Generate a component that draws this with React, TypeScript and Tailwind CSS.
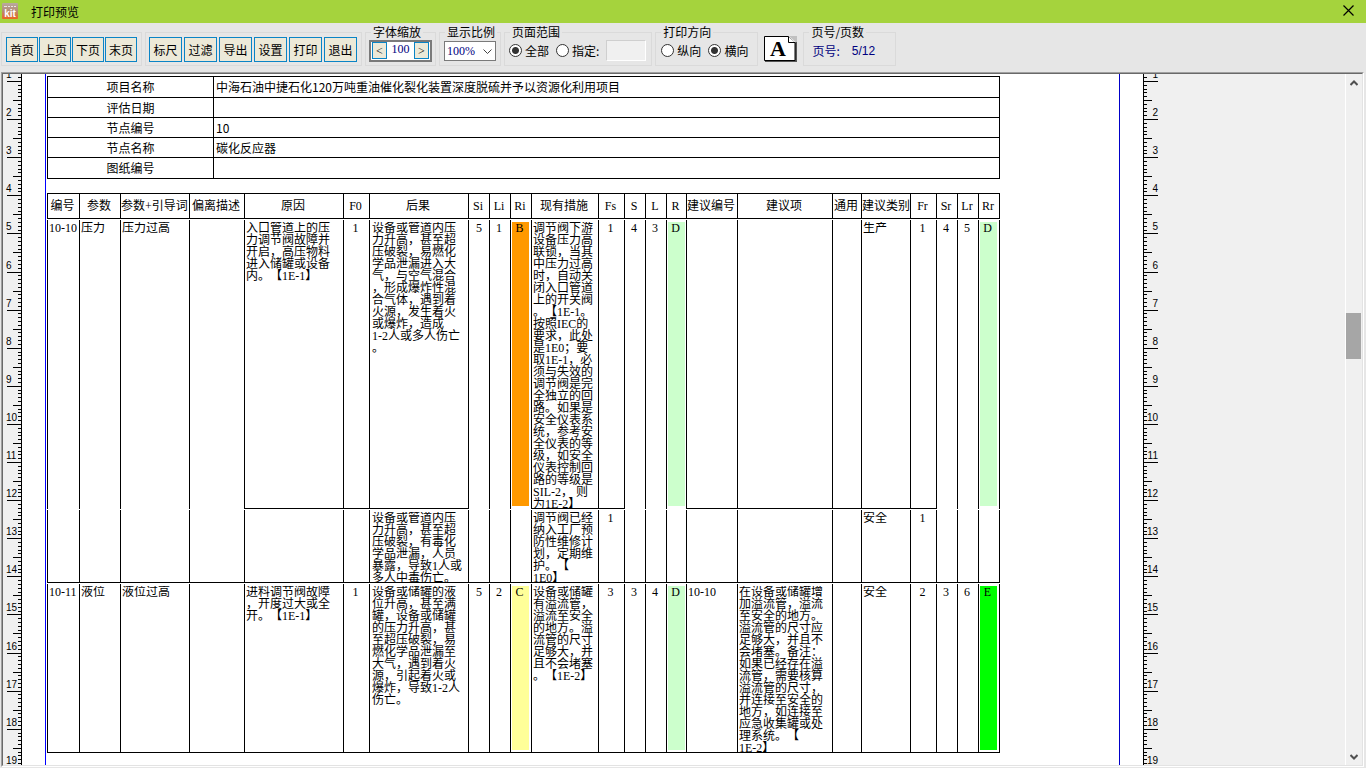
import { useState } from 'react';
import type { ReactNode } from 'react';

type Cell = {
  text?: string;
  fill?: string;
  open?: boolean; // no bottom rule, the cell runs on into the next row
};

type Row = {
  id: string;
  textHeight: string;
  fillHeight: string;
  cells: Cell[];
};

const columns = [
  { title: '编号', width: 'w-[33px]', body: 'pl-px' },
  { title: '参数', width: 'w-[41px]', body: 'pl-px' },
  { title: '参数+引导词', width: 'w-[69px]', body: 'pl-px' },
  { title: '偏离描述', width: 'w-[55px]', body: 'pl-px' },
  { title: '原因', width: 'w-[99px]', body: 'pl-px' },
  { title: 'F0', width: 'w-[26px]', body: 'pr-0.5 text-center' },
  { title: '后果', width: 'w-[99px]', body: 'pl-0.5' },
  { title: 'Si', width: 'w-[21px]', body: 'text-center' },
  { title: 'Li', width: 'w-[21px]', body: 'pr-0.5 text-center' },
  { title: 'Ri', width: 'w-[21px]', body: 'text-center' },
  { title: '现有措施', width: 'w-[67px]', body: 'pl-px' },
  { title: 'Fs', width: 'w-[26px]', body: 'pr-0.5 text-center' },
  { title: 'S', width: 'w-[21px]', body: 'pr-0.5 text-center' },
  { title: 'L', width: 'w-[21px]', body: 'pr-0.5 text-center' },
  { title: 'R', width: 'w-[20px]', body: 'text-center' },
  { title: '建议编号', width: 'w-[51px]', body: 'pl-px' },
  { title: '建议项', width: 'w-[95px]', body: 'pl-px' },
  { title: '通用', width: 'w-[29px]', body: 'pl-px' },
  { title: '建议类别', width: 'w-[49px]', body: 'pl-px' },
  { title: 'Fr', width: 'w-[26px]', body: 'pr-0.5 text-center' },
  { title: 'Sr', width: 'w-[21px]', body: 'pr-0.5 text-center' },
  { title: 'Lr', width: 'w-[21px]', body: 'pr-0.5 text-center' },
  { title: 'Rr', width: 'w-[21px]', body: 'text-center' },
];

const rows: Row[] = [
  {
    id: '10-10',
    textHeight: 'h-[286px]',
    fillHeight: 'h-[284px]',
    cells: [
      { text: '10-10', open: true },
      { text: '压力', open: true },
      { text: '压力过高', open: true },
      { open: true },
      { text: '入口管道上的压\n力调节阀故障并\n开启，高压物料\n进入储罐或设备\n内。【1E-1】' },
      { text: '1' },
      {
        text: '设备或管道内压\n力升高，甚至超\n压破裂，易燃化\n学品泄漏进入大\n气，与空气混合\n，形成爆炸性混\n合气体，遇到着\n火源，发生着火\n或爆炸，造成\n1-2人或多人伤亡\n。',
      },
      { text: '5', open: true },
      { text: '1', open: true },
      { text: 'B', fill: 'bg-[#ff9900]', open: true },
      {
        text: '调节阀下游\n设备压力高\n联锁，当其\n中压力过高\n时，自动关\n闭入口管道\n上的开关阀\n。【1E-1。\n按照IEC的\n要求，此处\n是1E0；要\n取1E-1，必\n须与失效的\n调节阀是完\n全独立的回\n路。如果是\n安全仪表系\n统，参考安\n全仪表的等\n级，如安全\n仪表控制回\n路的等级是\nSIL-2， 则\n为1E-2】',
      },
      { text: '1' },
      { text: '4', open: true },
      { text: '3', open: true },
      { text: 'D', fill: 'bg-[#ccffcc]', open: true },
      {},
      {},
      {},
      { text: '生产' },
      { text: '1' },
      { text: '4', open: true },
      { text: '5', open: true },
      { text: 'D', fill: 'bg-[#ccffcc]', open: true },
    ],
  },
  {
    id: '10-10-2',
    textHeight: 'h-[70px]',
    fillHeight: 'h-[68px]',
    cells: [
      {},
      {},
      {},
      {},
      {},
      {},
      { text: '设备或管道内压\n力升高，甚至超\n压破裂，有毒化\n学品泄漏，人员\n暴露，导致1人或\n多人中毒伤亡。' },
      {},
      {},
      {},
      { text: '调节阀已经\n纳入工厂预\n防性维修计\n划，定期维\n护。【\n1E0】' },
      { text: '1' },
      {},
      {},
      {},
      {},
      {},
      {},
      { text: '安全' },
      { text: '1' },
      {},
      {},
      {},
    ],
  },
  {
    id: '10-11',
    textHeight: 'h-[166px]',
    fillHeight: 'h-[164px]',
    cells: [
      { text: '10-11' },
      { text: '液位' },
      { text: '液位过高' },
      {},
      { text: '进料调节阀故障\n，开度过大或全\n开。【1E-1】' },
      { text: '1' },
      {
        text: '设备或储罐的液\n位升高，甚至满\n罐，设备或储罐\n的压力升高，甚\n至超压破裂，易\n燃化学品泄漏至\n大气，遇到着火\n源，引起着火或\n爆炸，导致1-2人\n伤亡。',
      },
      { text: '5' },
      { text: '2' },
      { text: 'C', fill: 'bg-[#ffff99]' },
      { text: '设备或储罐\n有溢流管，\n溢流至安全\n的地方。溢\n流管的尺寸\n足够大，并\n且不会堵塞\n。【1E-2】' },
      { text: '3' },
      { text: '3' },
      { text: '4' },
      { text: 'D', fill: 'bg-[#ccffcc]' },
      { text: '10-10' },
      {
        text: '在设备或储罐增\n加溢流管，溢流\n至安全的地方。\n溢流管的尺寸应\n足够大，并且不\n会堵塞。备注：\n如果已经存在溢\n流管，需要核算\n溢流管的尺寸，\n并连接至安全的\n地方，如连接至\n应急收集罐或处\n理系统。【\n1E-2】',
      },
      {},
      { text: '安全' },
      { text: '2' },
      { text: '3' },
      { text: '6' },
      { text: 'E', fill: 'bg-[#00ff00]' },
    ],
  },
];

const info = [
  ['项目名称', '中海石油中捷石化120万吨重油催化裂化装置深度脱硫并予以资源化利用项目'],
  ['评估日期', ''],
  ['节点编号', '10'],
  ['节点名称', '碳化反应器'],
  ['图纸编号', ''],
];

const ToolButton = ({ children, width }: { children: ReactNode; width: string }) => (
  <button className={`h-[25px] border border-[#0a84c6] bg-[#ece9d8] leading-[23px] hover:bg-[#f6f4ea] ${width}`}>
    {children}
  </button>
);

const Group = ({ title, children, className }: { title: string; children: ReactNode; className: string }) => (
  <fieldset className="h-10 border border-[#dadada]">
    <legend className="ml-[5px] px-0.5 leading-3">{title}</legend>
    <div className={`flex h-[25px] items-center ${className}`}>{children}</div>
  </fieldset>
);

const Radio = ({ name, label, defaultChecked }: { name: string; label: string; defaultChecked?: boolean }) => (
  <label className="flex items-center gap-[3px]">
    <input
      type="radio"
      name={name}
      defaultChecked={defaultChecked}
      className="size-[13px] appearance-none rounded-full border border-[#333] bg-white checked:bg-[radial-gradient(circle,#333_3px,#fff_4px)]"
    />
    {label}
  </label>
);

const Ruler = ({ side }: { side: 'left' | 'right' }) => {
  const left = side === 'left';
  const ticks = Array.from({ length: 200 }, (_, i) => i - 1);
  return (
    <svg width="19" height="770" className="block shrink-0" shapeRendering="crispEdges">
      <rect x={left ? 18 : 0} y="0" width="1" height="770" fill="#000" />
      {ticks.map((k) => {
        const len = k % 10 === 0 ? 14 : k % 5 === 0 ? 8 : 3;
        return <rect key={k} x={left ? 18 - len : 1} y={Math.round(7 + k * 3.81)} width={len} height="1" fill="#000" />;
      })}
      {ticks
        .filter((k) => k % 10 === 0 && k <= 180)
        .map((k) => (
          <text
            key={k}
            x={left ? 3 : 15}
            y={Math.round(7 + k * 3.81) - 3}
            textAnchor={left ? 'start' : 'end'}
            className="fill-black font-['Liberation_Sans',sans-serif] text-[10px]"
          >
            {k / 10 + 1}
          </text>
        ))}
    </svg>
  );
};

const PrintTable = () => (
  <table className="w-[953px] table-fixed border-separate border-spacing-x-0 border-spacing-y-px font-['Liberation_Serif','Noto_Sans_CJK_SC',serif] text-[12px] leading-3 [text-spacing-trim:space-all]">
    <colgroup>
      {columns.map((c) => (
        <col key={c.title} className={c.width} />
      ))}
    </colgroup>
    <thead>
      <tr className="h-[26px]">
        {columns.map((c) => (
          <th
            key={c.title}
            className="border-y border-r border-black p-0 pr-0.5 text-center align-middle font-normal whitespace-nowrap first:border-l"
          >
            {c.title}
          </th>
        ))}
      </tr>
    </thead>
    <tbody>
      {rows.map((row) => (
        <tr key={row.id}>
          {row.cells.map((cell, i) => (
            <td
              key={columns[i].title}
              className={`border-r border-r-black p-0 align-top first:border-l first:border-l-black ${
                cell.open ? '' : 'border-b border-b-black'
              }`}
            >
              {cell.fill ? (
                <div className={`mt-0.5 ml-px w-[17px] pr-0.5 text-center ${row.fillHeight} ${cell.fill}`}>
                  {cell.text}
                </div>
              ) : (
                <div className={`mt-0.5 overflow-hidden whitespace-pre ${row.textHeight} ${columns[i].body}`}>
                  {cell.text}
                </div>
              )}
            </td>
          ))}
        </tr>
      ))}
    </tbody>
  </table>
);

export default function App() {
  const [scale, setScale] = useState(100);

  return (
    <div
      lang="zh-CN"
      className="flex h-screen flex-col overflow-hidden bg-[#e6e6e6] font-['Noto_Sans_CJK_SC',sans-serif] text-[12px] leading-4 text-black"
    >
      <header className="flex h-[23px] shrink-0 items-center bg-[#a5d33d] pr-3 pl-0.5">
        <svg width="16" height="16" viewBox="0 0 16 16" className="mb-0.5">
          <defs>
            <linearGradient id="kit" x1="0" y1="0" x2="0" y2="1">
              <stop offset="0" stopColor="#b9aaa0" />
              <stop offset="0.45" stopColor="#b58f78" />
              <stop offset="1" stopColor="#ec6520" />
            </linearGradient>
          </defs>
          <rect width="16" height="16" rx="1" fill="url(#kit)" />
          <path d="M2 3.500h3M6 3.500h2M9 3.500h2M12 3.500h2" stroke="#ece6e2" />
          <text x="8" y="14" textAnchor="middle" fill="#fff" className="font-['Liberation_Sans',sans-serif] text-[10px] font-bold">
            kit
          </text>
        </svg>
        <h1 className="ml-[13px]">打印预览</h1>
        <button aria-label="关闭" className="mb-0.5 ml-auto">
          <svg width="11" height="11" viewBox="0 0 11 11" className="block" stroke="#000" strokeWidth="1.2">
            <path d="M0.500 0.500L10.500 10.500M10.500 0.500L0.500 10.500" />
          </svg>
        </button>
      </header>

      <div className="flex h-[49px] shrink-0 items-end gap-[3px] pb-1.5 pl-px">
        <div className="flex h-[34px] items-center gap-px border border-[#dadada] px-1 pt-px">
          <ToolButton width="w-8">首页</ToolButton>
          <ToolButton width="w-8">上页</ToolButton>
          <ToolButton width="w-8">下页</ToolButton>
          <ToolButton width="w-8">末页</ToolButton>
        </div>
        <div className="flex h-[34px] items-center gap-0.5 border border-[#dadada] pt-px pr-1 pl-[3px]">
          <ToolButton width="w-[33px]">标尺</ToolButton>
          <ToolButton width="w-[33px]">过滤</ToolButton>
          <ToolButton width="w-[33px]">导出</ToolButton>
          <ToolButton width="w-[33px]">设置</ToolButton>
          <ToolButton width="w-[33px]">打印</ToolButton>
          <ToolButton width="w-[33px]">退出</ToolButton>
        </div>

        <Group title="字体缩放" className="px-[3px]">
          <div className="flex h-[22px] w-[63px] items-center justify-between border-2 border-[#7a7a7a] bg-white px-px font-['Liberation_Serif',serif]">
            <button
              aria-label="缩小"
              onClick={() => setScale(scale - 5)}
              className="h-[17px] w-[15px] border border-[#0a84c6] bg-[#ece9d8] leading-[14px]"
            >
              &lt;
            </button>
            <output className="pb-1 text-[#000080]">{scale}</output>
            <button
              aria-label="放大"
              onClick={() => setScale(scale + 5)}
              className="h-[17px] w-[15px] border border-[#0a84c6] bg-[#ece9d8] leading-[14px]"
            >
              &gt;
            </button>
          </div>
        </Group>

        <Group title="显示比例" className="px-1">
          <div className="relative">
            <select
              aria-label="显示比例"
              className="block h-5 w-[52px] appearance-none border border-[#7a7a7a] bg-white pl-0.5 font-['Liberation_Serif',serif] leading-[18px] text-[#000080]"
            >
              <option>100%</option>
              <option>75%</option>
              <option>50%</option>
            </select>
            <svg width="9" height="6" viewBox="0 0 9 6" className="pointer-events-none absolute top-2 right-1" fill="none" stroke="#444">
              <path d="M0.500 0.500L4.500 4.500L8.500 0.500" />
            </svg>
          </div>
        </Group>

        <Group title="页面范围" className="gap-[7px] pr-[5px] pl-1">
          <Radio name="range" label="全部" defaultChecked />
          <Radio name="range" label="指定:" />
          <input
            aria-label="指定页"
            className="h-[21px] w-10 border border-t-[#cfcfcf] border-r-white border-b-white border-l-[#cfcfcf] bg-[#f0f0f0] px-1"
          />
        </Group>

        <Group title="打印方向" className="gap-[7px] pr-[9px] pl-[5px]">
          <Radio name="orientation" label="纵向" />
          <Radio name="orientation" label="横向" defaultChecked />
        </Group>

        <button aria-label="字体" className="mx-[3px] mb-1">
          <svg width="33" height="26" viewBox="0 0 33 26" className="block">
            <path d="M25 0h8v7z" fill="#c0c0c0" />
            <path d="M32 6v19H1" fill="none" stroke="#555" strokeWidth="2" />
            <path d="M0.500 0.500H24.500L31 7V24.500H0.500z" fill="#fff" stroke="#000" />
            <path d="M24.500 0.500V6.500H31" fill="#fff" stroke="#000" />
            <text x="14" y="20" textAnchor="middle" className="fill-black font-['Liberation_Serif',serif] text-[22px] font-bold">
              A
            </text>
          </svg>
        </button>

        <Group title="页号/页数" className="w-[91px] gap-3 pl-2 text-[#000080]">
          <span>页号:</span>
          <span className="font-['Liberation_Sans',sans-serif]">5/12</span>
        </Group>
      </div>

      <main className="mr-0.5 mb-px ml-px flex min-h-0 flex-1 border border-t-[#a0a0a0] border-r-white border-b-white border-l-[#a0a0a0]">
        <div className="flex min-w-0 flex-1 border border-t-[#696969] border-r-[#e3e3e3] border-b-[#e3e3e3] border-l-[#696969] bg-[#f0f0f0]">
          <div className="flex min-w-0 flex-1 overflow-hidden">
            <Ruler side="left" />
            <div className="flex shrink-0 bg-white px-[23px]">
              <section className="w-[1075px] border-x border-l-[#0000ff] border-r-[#0000c8] pt-0.5 pl-px">
                <table className="mb-[13px] w-[953px] table-fixed border-separate border-spacing-0 border-t border-l border-black">
                  <tbody>
                    {info.map(([label, value]) => (
                      <tr key={label} className="h-5 first:h-[21px] last:h-[21px]">
                        <th className="w-[166px] border-r border-b border-black p-0 text-center font-normal">{label}</th>
                        <td className="border-r border-b border-black p-0 pl-0.5">{value}</td>
                      </tr>
                    ))}
                  </tbody>
                </table>
                <PrintTable />
              </section>
            </div>
            <Ruler side="right" />
          </div>

          <div className="flex w-[17px] shrink-0 flex-col items-center border-l border-white">
            <button aria-label="向上滚动" className="flex h-[17px] w-full items-center justify-center">
              <svg width="8" height="6" viewBox="0 0 8 6" fill="none" stroke="#505050" strokeWidth="2">
                <path d="M0.500 5L4 1.500L7.500 5" />
              </svg>
            </button>
            <div className="flex w-full flex-1 flex-col">
              <div className="grow-[222]" />
              <div className="h-[46px] w-[15px] bg-[#a6a6a6]" />
              <div className="grow-[389]" />
            </div>
            <button aria-label="向下滚动" className="flex h-[17px] w-full items-center justify-center">
              <svg width="8" height="6" viewBox="0 0 8 6" fill="none" stroke="#505050" strokeWidth="2">
                <path d="M0.500 1L4 4.500L7.500 1" />
              </svg>
            </button>
          </div>
        </div>
      </main>
    </div>
  );
}
